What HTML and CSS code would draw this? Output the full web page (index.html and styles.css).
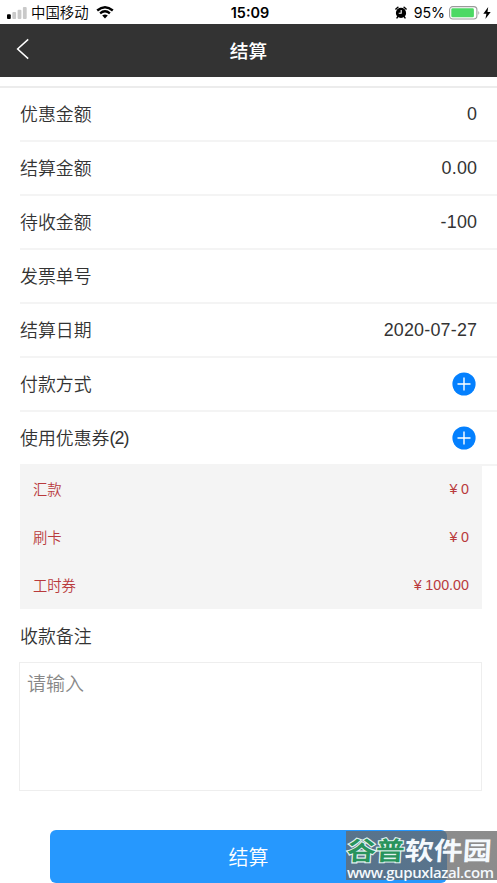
FILE: index.html
```html
<!DOCTYPE html>
<html lang="zh-CN">
<head>
<meta charset="utf-8">
<title>结算</title>
<link rel="stylesheet" href="styles.css">
</head>
<body>
<div class="status">
  <div class="status-left">
    <svg class="signal" width="20" height="12" viewBox="0 0 20 12"><rect x="0" y="7.2" width="3.8" height="4.8" rx="1" fill="#000"/><rect x="5.3" y="5" width="3.8" height="7" rx="1" fill="#c9c9c9"/><rect x="10.6" y="2.7" width="3.8" height="9.3" rx="1" fill="#c9c9c9"/><rect x="15.9" y="0" width="3.8" height="12" rx="1" fill="#c9c9c9"/></svg>
    <span class="carrier">中国移动</span>
    <svg class="wifi" width="18" height="13" viewBox="0 0 18 13"><path d="M1.2 4.5Q9-2 16.8 4.5M4.1 7.4Q9 3.3 13.9 7.4" fill="none" stroke="#000" stroke-width="2.4"/><path d="M6.2 9.5Q9 7.4 11.8 9.5L9 12.5Z"/></svg>
  </div>
  <span class="clock">15:09</span>
  <div class="status-right">
    <svg class="alarm" width="12" height="13" viewBox="0 0 12 13"><circle cx="6" cy="6.9" r="5.1"/><path d="M.9 3L2.9 1.3M11.1 3L9.1 1.3M2.8 10.7L2 11.9M9.2 10.7L10 11.9" stroke="#000" stroke-width="1.5" stroke-linecap="round"/><path d="M6.2 4V7.3H3.7" fill="none" stroke="#fff" stroke-width="1.1"/></svg>
    <span class="percent">95%</span>
    <svg class="battery" width="32" height="14" viewBox="0 0 32 14"><rect x=".6" y=".6" width="27.3" height="12.4" rx="3.2" fill="#fff" stroke="#9b9b9b" stroke-width="1.1"/><rect x="2.3" y="2.3" width="22.6" height="9" rx="1.4" fill="#4cd964"/><path d="M29.4 4.7Q31.2 6.8 29.4 8.9Z" fill="#9b9b9b"/></svg>
    <svg class="bolt" width="8" height="12" viewBox="0 0 8 12"><path d="M5.2 0L.3 6.7H3.4L2.4 12L7.7 4.9H4.5Z"/></svg>
  </div>
</div>
<header class="nav">
  <svg class="back" width="14" height="22" viewBox="0 0 14 22"><path d="M12.2 1.4L1.6 11L12.2 20.6" fill="none" stroke="#fff" stroke-width="1.5"/></svg>
  <h1 class="title">结算</h1>
</header>
<main class="form">
  <div class="row"><span>优惠金额</span><span class="value">0</span></div>
  <div class="row"><span>结算金额</span><span class="value">0.00</span></div>
  <div class="row"><span>待收金额</span><span class="value">-100</span></div>
  <div class="row"><span>发票单号</span></div>
  <div class="row"><span>结算日期</span><span class="value">2020-07-27</span></div>
  <div class="row"><span>付款方式</span><svg class="plus" width="24" height="24" viewBox="0 0 24 24"><circle cx="12" cy="12" r="11.6" fill="#0480fe"/><path d="M12 5.5V18.5M5.5 12H18.5" stroke="#fff" stroke-width="1.4"/></svg></div>
  <div class="row"><span>使用优惠券<span class="count">(2)</span></span><svg class="plus" width="24" height="24" viewBox="0 0 24 24"><circle cx="12" cy="12" r="11.6" fill="#0480fe"/><path d="M12 5.5V18.5M5.5 12H18.5" stroke="#fff" stroke-width="1.4"/></svg></div>
  <div class="details">
    <div class="detail"><span>汇款</span><span class="money"><span class="yen">¥</span>0</span></div>
    <div class="detail"><span>刷卡</span><span class="money"><span class="yen">¥</span>0</span></div>
    <div class="detail"><span>工时券</span><span class="money"><span class="yen">¥</span>100.00</span></div>
  </div>
  <label class="remark-label" for="remark">收款备注</label>
  <textarea class="remark" id="remark" placeholder="请输入"></textarea>
  <button class="submit">结算</button>
</main>
<div class="watermark">
  <div class="brand"><span class="brand-green">谷普</span><span class="brand-white">软件园</span></div>
  <div class="site">www.gupuxlazal.com</div>
</div>
</body>
</html>
```
FILE: styles.css
```css
* { box-sizing: border-box; }
body {
  margin: 0;
  height: 883px;
  position: relative;
  overflow: hidden;
  background: #fff;
  color: #333;
  font-family: "Liberation Sans", "Noto Sans CJK SC", sans-serif;
  font-weight: 350;
}
svg { display: block; flex: none; }
.status {
  height: 24px;
  display: grid;
  grid-template-columns: 1fr auto 1fr;
  align-items: center;
  padding: 1px 6px 0 7px;
  color: #000;
}
.status-left, .status-right { display: flex; align-items: center; }
.status-right { justify-content: flex-end; }
.signal { margin-bottom: 1px; }
.carrier { font-size: 14.4px; line-height: 24px; margin-left: 4px; }
.wifi { margin: -2px 0 0 7px; }
.clock { font: 600 14.4px/24px Inter, sans-serif; padding-left: 2px; }
.alarm { margin-bottom: 2px; }
.percent { font: 400 14.2px/24px Inter, sans-serif; margin: 0 4px 0 7px; }
.battery { margin-bottom: 1px; }
.bolt { margin-left: 2px; }
.nav {
  height: 53px;
  display: grid;
  grid-template-columns: 1fr auto 1fr;
  align-items: center;
  padding: 0 16px;
  background: #333;
  color: #fff;
}
.back { margin-bottom: 3px; }
.title { margin: 0; padding-top: 2px; font-size: 18.7px; font-weight: 500; line-height: 51px; }
.form { display: flex; flex-direction: column; margin-top: 9px; border-top: 2px solid #ececec; padding-left: 20px; }
.row {
  height: 54px;
  display: flex;
  align-items: center;
  justify-content: space-between;
  padding-right: 20px;
  border-bottom: 2px solid #f4f4f4;
  font-size: 17.9px;
}
.row > span:first-child { margin-top: -2px; }
.value { letter-spacing: .2px; margin-right: -.2px; }
.count { letter-spacing: -.9px; position: relative; top: -1px; }
.plus { margin-right: 1px; }
.details { width: 462px; background: #f4f4f4; padding: 0 13px; color: #b93a3c; font-size: 14.3px; height: 143px; }
.detail { height: 48px; display: flex; align-items: center; justify-content: space-between; padding-bottom: 2px; }
.detail > span:first-child { margin-top: -2px; }
.yen { margin-right: 3.5px; }
.remark-label { font-size: 17.9px; line-height: 56px; height: 53px; }
.remark {
  width: 463px;
  height: 129px;
  margin: 0 0 0 -1px;
  padding: 7px;
  border: 1.5px solid #eee;
  border-radius: 0;
  outline: 0;
  resize: none;
  font: 350 19px/29px "Liberation Sans", "Noto Sans CJK SC", sans-serif;
}
.remark::placeholder { color: #888; }
.submit {
  width: 397px;
  height: 53px;
  margin: 39px 0 0 30px;
  padding: 0;
  border: 0;
  border-radius: 6px;
  background: #2698fe;
  color: #fff;
  font: 350 20px/53px "Noto Sans CJK SC", sans-serif;
}
.watermark {
  position: absolute;
  right: 0;
  bottom: 0;
  width: 151px;
  height: 52px;
  background: linear-gradient(rgba(104, 104, 104, .76) 49px, transparent 49px);
  color: #f4f9fd;
  white-space: nowrap;
}
.brand {
  width: 130px;
  height: 33px;
  padding-left: 1px;
  font: 700 25.5px/36px "Noto Sans CJK SC", sans-serif;
  transform: scaleX(1.135) skewX(-3deg);
  transform-origin: 0 50%;
}
.brand-green { color: #28935c; -webkit-text-stroke: 2.2px #e3f3f1; paint-order: stroke fill; }
.site { padding-left: 1px; font: 600 15px/16px "Open Sans", sans-serif; letter-spacing: -.4px; }
```
